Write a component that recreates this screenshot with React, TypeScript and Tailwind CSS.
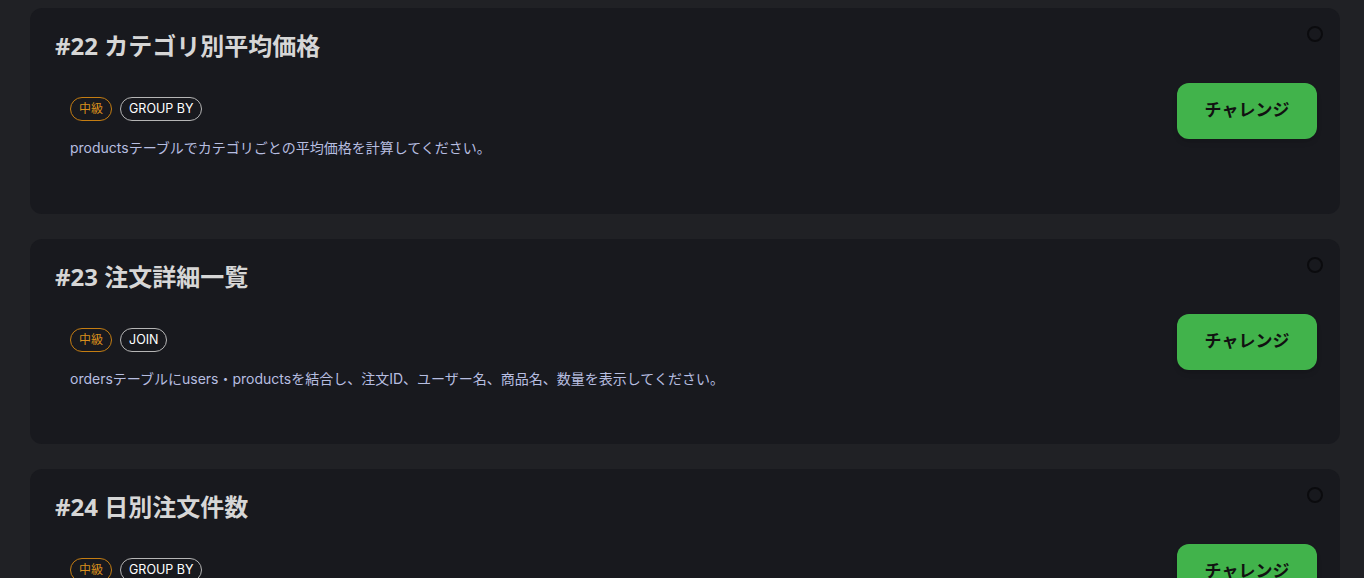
import React from 'react';

interface Problem {
  id: number;
  title: string;
  level: string;
  tag: string;
  description: string;
}

const problems: Problem[] = [
  {
    id: 22,
    title: 'カテゴリ別平均価格',
    level: '中級',
    tag: 'GROUP BY',
    description: 'productsテーブルでカテゴリごとの平均価格を計算してください。',
  },
  {
    id: 23,
    title: '注文詳細一覧',
    level: '中級',
    tag: 'JOIN',
    description: 'ordersテーブルにusers・productsを結合し、注文ID、ユーザー名、商品名、数量を表示してください。',
  },
  {
    id: 24,
    title: '日別注文件数',
    level: '中級',
    tag: 'GROUP BY',
    description: 'ordersテーブルで日ごとの注文件数を集計してください。',
  },
];

const ProblemCard: React.FC<{ problem: Problem }> = ({ problem }) => {
  return (
    <div className="relative flex h-[205.5px] shrink-0 rounded-xl bg-[#18191e] pl-[25px] pr-[23px]">
      <span className="absolute right-[17px] top-[18px] h-4 w-4 rounded-full border-2 border-[#0b0b0e]" />
      <div className="flex-1 pt-[22px]">
        <h3 className="text-[24px] font-bold leading-8 text-[#d6d6d6] [font-family:'Noto_Sans','Noto_Sans_CJK_JP',sans-serif]">
          #{problem.id} {problem.title}
        </h3>
        <div className="mt-[35px] pl-[15px]">
          <div className="flex gap-2">
            <span className="rounded-full border border-[#c47d12] px-2 text-[12px] leading-[22px] text-[#d88f1c]">
              {problem.level}
            </span>
            <span className="rounded-full border border-[#b5b5b5] px-2 text-[12.5px] leading-[22px] text-white">
              {problem.tag}
            </span>
          </div>
          <p className="mt-[17px] text-[14px] leading-5 text-[#b7bee0]">{problem.description}</p>
        </div>
      </div>
      <div className="pt-[75px]">
        <button className="h-14 w-[140px] rounded-xl bg-[#41b34b] text-[17px] font-bold text-[#111] shadow-md">
          チャレンジ
        </button>
      </div>
    </div>
  );
};

export default function App() {
  return (
    <div className="flex h-[578px] flex-col gap-[25px] overflow-hidden bg-[#202125] pl-[30px] pr-[24px] pt-2 [font-family:Inter,'Noto_Sans_CJK_JP',sans-serif]">
      {problems.map((p) => (
        <ProblemCard key={p.id} problem={p} />
      ))}
    </div>
  );
}
